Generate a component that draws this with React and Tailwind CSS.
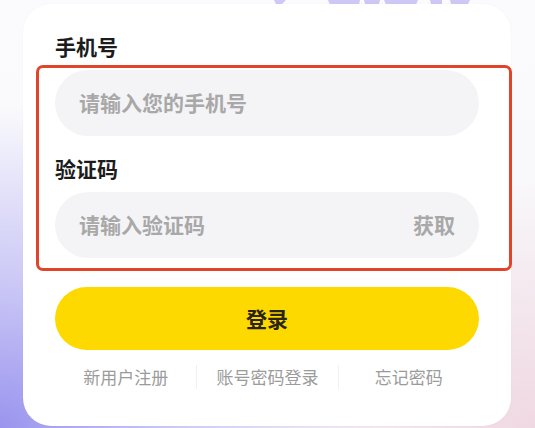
import React from 'react';

const font = { fontFamily: '"Noto Sans CJK SC", "Noto Sans", sans-serif' };

const Field = ({ label, placeholder, action, first }) => (
  <div className={first ? '' : 'mt-[18px]'}>
    <div className="text-[21px] leading-7 font-bold text-[#1c1c1c]">{label}</div>
    <div className="mt-[10px] h-[66px] rounded-full bg-[#f4f4f6] flex items-center justify-between pl-6 pr-6">
      <span className="text-[21px] font-semibold text-[#a8a8a8]">{placeholder}</span>
      {action && <span className="text-[21px] font-semibold text-[#a8a8a8]">{action}</span>}
    </div>
  </div>
);

export default function App() {
  const links = ['新用户注册', '账号密码登录', '忘记密码'];

  return (
    <div
      className="relative w-[535px] h-[428px] overflow-hidden bg-[radial-gradient(ellipse_70%_75%_at_0%_100%,#9a94ee_0%,#cbc8f6_45%,transparent_100%),radial-gradient(ellipse_60%_60%_at_100%_100%,#f0d8e2_0%,transparent_100%),linear-gradient(#fbfbfd,#f6f6fa)]"
      style={font}
    >
      {/* lavender title behind the card */}
      <svg className="absolute left-[260px] top-0" width="220" height="14" viewBox="0 0 220 14">
        <g fill="#cdc8f5">
          <path d="M14 0 L26 0 L22 4 L16 4 Z" />
          <path d="M68 0 L100 0 L98 9 L72 10 Z" />
          <path d="M104 0 L120 0 L118 8 L106 8 Z" />
          <path d="M124 0 L158 0 L154 9 L128 9 Z" />
          <path d="M170 0 L182 0 L182 8 L172 8 Z" />
          <path d="M190 0 L210 0 L206 8 L192 8 Z" />
        </g>
      </svg>

      <div className="absolute left-[23px] top-[4px] w-[488px] rounded-[28px] bg-white px-8 pt-7 pb-[37px] shadow-[0_0_2px_rgba(0,0,0,0.04)]">
        <Field label="手机号" placeholder="请输入您的手机号" first />
        <Field label="验证码" placeholder="请输入验证码" action="获取" />

        <button className="mt-[29px] w-full h-[63px] rounded-full bg-[#fdd900] text-[21px] font-bold text-[#2a2413]">
          登录
        </button>

        <div className="mt-[15px] grid grid-cols-3 items-center">
          {links.map((t, i) => (
            <div
              key={t}
              className={
                'h-6 flex items-center justify-center text-[17px] text-[#9b9b9b] ' +
                (i > 0 ? 'border-l border-[#f0f0f0]' : '')
              }
            >
              {t}
            </div>
          ))}
        </div>
      </div>

      {/* annotation highlight */}
      <div className="absolute left-[36px] top-[65px] w-[476px] h-[206px] rounded-[7px] border-[3px] border-[#e2442b]" />
    </div>
  );
}
